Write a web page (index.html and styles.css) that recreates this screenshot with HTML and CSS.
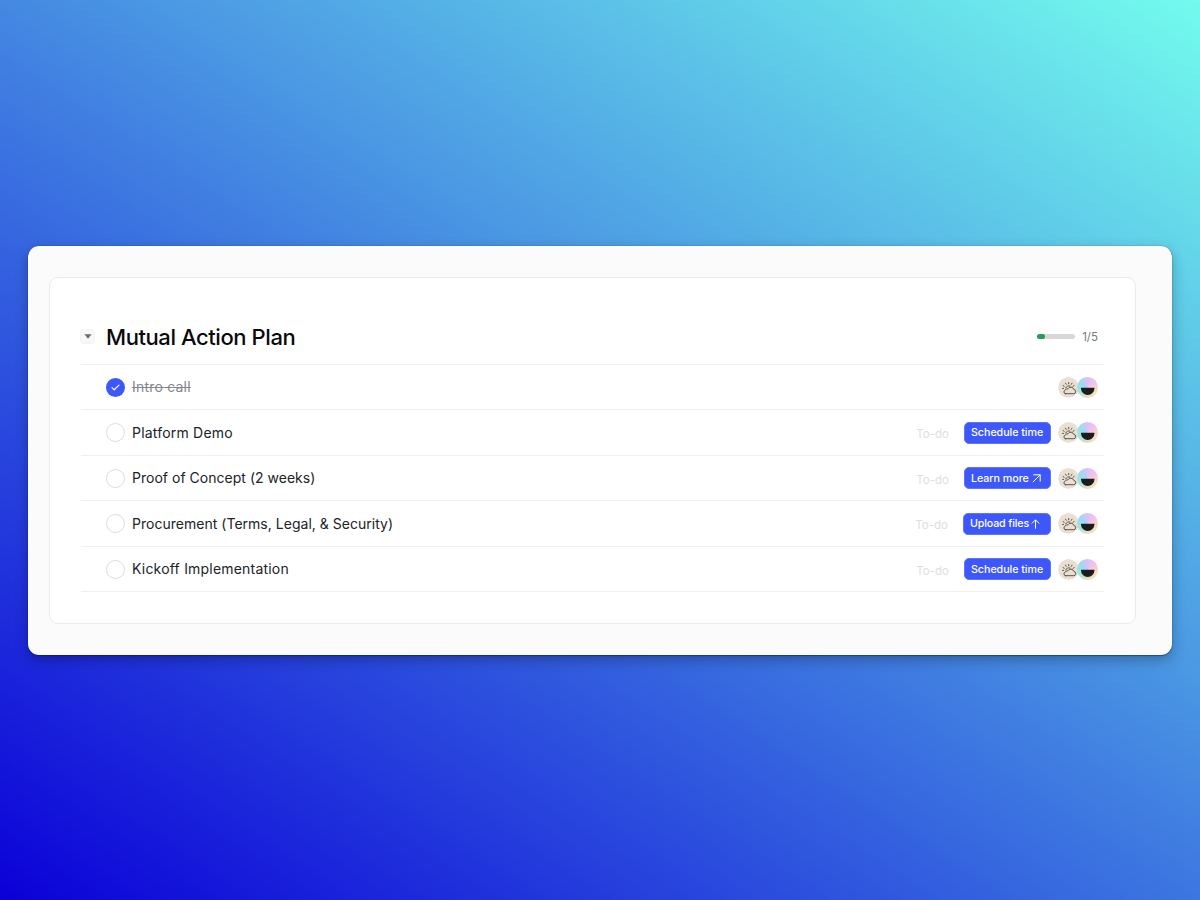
FILE: index.html
```html
<!DOCTYPE html>
<html lang="en">
<head>
<meta charset="UTF-8">
<meta name="viewport" content="width=device-width, initial-scale=1.0">
<title>Mutual Action Plan</title>
<link rel="stylesheet" href="styles.css">
</head>
<body>

<!-- shared icons -->
<svg class="sprite" width="0" height="0">
  <defs>
    <symbol id="weather" viewBox="0 0 20 20">
      <circle cx="10" cy="10" r="10" fill="#e9dfd2"/>
      <g fill="none" stroke="#554b43" stroke-width="0.9" stroke-linecap="round" stroke-linejoin="round">
        <path d="M7 15.9h7.6a2 2 0 0 0 .5-4 3.1 3.1 0 0 0-5.7-.6 2.1 2.1 0 0 0-2.4 1.2 1.75 1.75 0 0 0 0 3.4z"/>
        <path d="M7.3 10.4a3.1 3.1 0 0 1 4.2-1.8M10.2 5.2v1.2M7.2 5.9l.6 1.1M13.3 5.9l-.6 1.1M4.8 8.2l1.1.6M15.4 8.2l-1.1.6M4.4 10.9h.9"/>
      </g>
    </symbol>
    <symbol id="bowl" viewBox="0 0 20 20">
      <path d="M3.8 10.2h12.8v.7a6.4 6.2 0 0 1-12.8 0z" fill="#1b1b20"/>
    </symbol>
  </defs>
</svg>

<div class="window">
  <div class="panel">
    <div class="header">
      <button class="toggle"><svg width="8" height="5" viewBox="0 0 8 5"><path d="M0.4 0.2h7.2L4 4.8z" fill="#6c6c6c"/></svg></button>
      <h1 class="title">Mutual Action Plan</h1>
      <div class="progress"><div class="progress-bar" style="width: 20%;"></div></div>
      <span class="count">1/5</span>
    </div>

    <div class="row">
      <span class="check done"><svg width="9" height="7" viewBox="0 0 9 7"><path d="M1 3.6l2.2 2.2L8 1.1" fill="none" stroke="#fff" stroke-width="1.2" stroke-linecap="round" stroke-linejoin="round"/></svg></span>
      <span class="name short struck">Intro call</span>
      <div class="people"><svg class="avatar"><use href="#weather"/></svg><svg class="avatar rainbow"><use href="#bowl"/></svg></div>
    </div>
    <div class="row">
      <span class="check"></span>
      <span class="name short">Platform Demo</span>
      <span class="status">To-do</span>
      <button class="button schedule">Schedule time</button>
      <div class="people"><svg class="avatar"><use href="#weather"/></svg><svg class="avatar rainbow"><use href="#bowl"/></svg></div>
    </div>
    <div class="row">
      <span class="check"></span>
      <span class="name">Proof of Concept (2 weeks)</span>
      <span class="status">To-do</span>
      <button class="button learn">Learn more <svg width="9" height="9" viewBox="0 0 9 9"><path d="M0.8 8.2L8.2 0.8M1.4 0.8h6.8v6.8" fill="none" stroke="#fff"/></svg></button>
      <div class="people"><svg class="avatar"><use href="#weather"/></svg><svg class="avatar rainbow"><use href="#bowl"/></svg></div>
    </div>
    <div class="row">
      <span class="check"></span>
      <span class="name">Procurement (Terms, Legal, &amp; Security)</span>
      <span class="status">To-do</span>
      <button class="button upload">Upload files <svg width="9" height="10" viewBox="0 0 9 10"><path d="M4.5 9.7V0.9M0.8 4.5l3.7-3.7 3.7 3.7" fill="none" stroke="#fff"/></svg></button>
      <div class="people"><svg class="avatar"><use href="#weather"/></svg><svg class="avatar rainbow"><use href="#bowl"/></svg></div>
    </div>
    <div class="row">
      <span class="check"></span>
      <span class="name short">Kickoff Implementation</span>
      <span class="status">To-do</span>
      <button class="button schedule">Schedule time</button>
      <div class="people"><svg class="avatar"><use href="#weather"/></svg><svg class="avatar rainbow"><use href="#bowl"/></svg></div>
    </div>
  </div>
</div>

</body>
</html>
```

FILE: styles.css
```css
* {
  box-sizing: border-box;
}
body {
  margin: 0;
  height: 100vh;
  display: flex;
  align-items: center;
  justify-content: center;
  overflow: hidden;
  font-family: Inter, "Liberation Sans", sans-serif;
  background: linear-gradient(33deg, #0b00d8 0%, #4a96e3 59%, #73fbed 100%);
}
.sprite {
  position: absolute;
}
.window {
  width: 1144px;
  height: 409px;
  padding: 31px 36px 31px 21px;
  background-color: #fbfbfb;
  border-radius: 11px;
  box-shadow: 0 0 1px rgba(0,20,80,0.6), 0 1px 1px rgba(0,20,80,0.4), 0 5px 14px rgba(0,0,0,0.28);
}
.panel {
  height: 347px;
  padding: 32px 31px 0;
  background-color: #fff;
  border: 1px solid #ebebeb;
  border-radius: 9px;
}
.header {
  display: flex;
  align-items: center;
  height: 55px;
  padding-right: 6px;
  border-bottom: 1px solid #f0f0f0;
}
.toggle {
  display: flex;
  align-items: center;
  justify-content: center;
  width: 15px;
  height: 15px;
  margin-left: -1px;
  padding: 0;
  border: 1px solid #f3f3f3;
  border-radius: 4px;
  background-color: #f8f8f8;
}
.title {
  flex: 1;
  margin: 0 0 0 11px;
  font-size: 22px;
  font-weight: 550;
  line-height: 28px;
  letter-spacing: -0.42px;
  color: #08090b;
}
.progress {
  width: 38px;
  height: 5px;
  margin-right: 7px;
  border-radius: 3px;
  background-color: #d8d8d8;
}
.progress-bar {
  height: 5px;
  border-radius: 3px;
  background-color: #259b5c;
}
.count {
  font-size: 11.5px;
  color: #77797d;
}
.row {
  display: flex;
  align-items: center;
  height: 45.5px;
  padding: 1px 6px 0 25px;
  border-bottom: 1px solid #f0f0f0;
}
.check {
  display: flex;
  align-items: center;
  justify-content: center;
  width: 19px;
  height: 19px;
  border: 1px solid #dedede;
  border-radius: 50%;
}
.done {
  border: 0;
  background-color: #3e57fb;
}
.name {
  margin: -1px auto 0 7px;
  font-size: 14px;
  font-weight: 380;
  letter-spacing: 0.02px;
  color: #202328;
}
.short {
  letter-spacing: 0.2px;
}
.struck {
  color: #85878d;
  text-decoration: line-through;
}
.status {
  margin: 3px 15px 0 0;
  font-size: 11.5px;
  color: #dedede;
}
.button {
  display: flex;
  align-items: center;
  justify-content: space-between;
  height: 22px;
  margin-right: 7px;
  padding: 0 6px;
  border: 1px solid #5f74ff;
  border-radius: 5px;
  background-color: #3e57fb;
  color: #fff;
  font-family: inherit;
  font-size: 10.7px;
  font-weight: 500;
  letter-spacing: -0.04px;
  white-space: nowrap;
}
.schedule {
  width: 87px;
}
.learn {
  width: 87px;
  padding-right: 9px;
}
.upload {
  width: 88px;
  padding-right: 10px;
  letter-spacing: -0.15px;
}
.people {
  display: flex;
}
.avatar {
  width: 21px;
  height: 21px;
  border-radius: 50%;
}
.rainbow {
  margin-left: -2px;
  background: conic-gradient(from 0deg, #dcc0fa, #f6c3e8, #f3e3b8, #e6dcc0, #9fe8d8, #98dcf4, #dcc0fa);
}
```
